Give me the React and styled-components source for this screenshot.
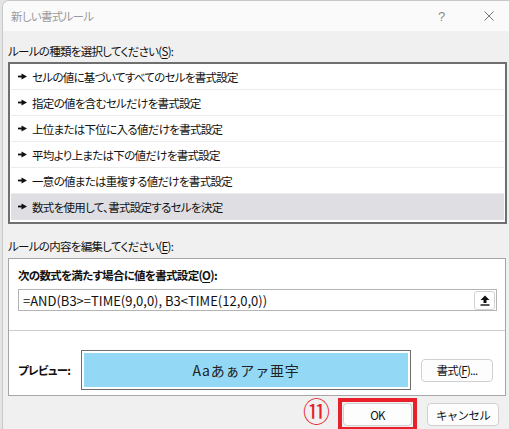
import React from "react";
import styled, { createGlobalStyle, css } from "styled-components";

const GlobalStyle = createGlobalStyle`
  body {
    margin: 0;
    background: #e4e4e4;
    font-family: "Noto Sans CJK JP", "Noto Sans", sans-serif;
    font-feature-settings: "palt";
    overflow: hidden;
  }
`;

// Yu Gothic UI is narrower than Noto, so tighten a bit
const uiText = css`
  font-size: 11.5px;
  letter-spacing: -0.7px;
`;

const DIALOG = styled.div`
  margin-left: 2px;
  width: 506px;
  height: 440px;
  background: #f0f0f0;
  border: 1px solid #c8c8c8;
  border-right: none;
  border-radius: 7px 0 0 0;
  overflow: hidden;
  display: flex;
  flex-direction: column;
`;

const TITLEBAR = styled.div`
  height: 30px;
  flex: none;
  background: #fafafa;
  display: flex;
  align-items: center;
  padding-left: 8px;
  ${uiText}
  color: #9a9a9a;
`;

const TITLE = styled.span`
  flex: 1;
`;

const HELP = styled.span`
  width: 14px;
  margin-right: 32px;
  color: #8a8a8a;
  font-size: 13px;
  font-family: "Liberation Sans", sans-serif;
`;

const CLOSE = styled.span`
  width: 10px;
  height: 10px;
  margin-right: 15px;
  display: flex;
`;

const BODY = styled.div`
  display: flex;
  flex-direction: column;
  padding: 0 2px 0 5px;
`;

const LABEL = styled.div`
  ${uiText}
  line-height: 16px;
  color: #111;
  margin-top: ${(p) => p.$top}px;
  u {
    text-decoration-thickness: 1px;
    text-underline-offset: 2px;
  }
`;

const LIST = styled.div`
  margin-top: 3px;
  border: 2px solid #6f6f6f;
  background: #fff;
  padding: 0 1px 2px 1px;
  display: flex;
  flex-direction: column;
`;

const ROW = styled.div`
  height: 26px;
  box-sizing: border-box;
  display: flex;
  align-items: center;
  padding-left: 7px;
  ${uiText}
  color: #111;
  background: ${(p) => (p.$selected ? "#dfdfe3" : "#fff")};
  border-bottom: 1px solid ${(p) => (p.$selected ? "#dfdfe3" : "#ececec")};
`;

const ARROW = styled.svg`
  width: 9px;
  height: 7px;
  margin-right: 5px;
  flex: none;
`;

const GROUP = styled.div`
  margin-top: 4px;
  margin-right: 1px;
  border: 1px solid #a6a6a6;
  background: #fff;
  display: flex;
  flex-direction: column;
`;

const FORMULA_AREA = styled.div`
  padding: 8px 8px 19px 9px;
  border-bottom: 1px solid #cdcdcd;
`;

const BOLD = styled.div`
  ${uiText}
  line-height: 16px;
  font-weight: 700;
  color: #111;
  u {
    text-underline-offset: 2px;
  }
`;

const INPUTBOX = styled.div`
  margin-top: 6px;
  height: 22px;
  box-sizing: border-box;
  border: 1px solid #b4b4b4;
  display: flex;
  align-items: center;
  padding: 0 1px 0 4px;
  font-size: 13px;
  color: #111;
`;

const FORMULA = styled.span`
  flex: 1;
  white-space: nowrap;
`;

const COLLAPSE = styled.button`
  width: 21px;
  height: 19px;
  padding: 0;
  border: 1px solid #d2d2d2;
  border-radius: 3px;
  background: #fff;
  display: flex;
  align-items: center;
  justify-content: center;
`;

const PREVIEW_AREA = styled.div`
  padding: 19px 10px 5px 9px;
  display: flex;
  align-items: center;
`;

const PREVIEW_LABEL = styled.span`
  width: 63px;
  ${uiText}
  font-weight: 700;
  color: #111;
`;

const PREVIEW = styled.div`
  width: 330px;
  height: 40px;
  box-sizing: border-box;
  border: 1px solid #6e6e6e;
  padding: 2px;
  background: #fff;
`;

const SAMPLE = styled.div`
  height: 100%;
  background: #93d9f5;
  display: flex;
  align-items: center;
  justify-content: center;
  font-size: 14px;
  letter-spacing: 0.8px;
  color: #222;
  font-feature-settings: normal;
`;

const BUTTON = styled.button`
  width: ${(p) => p.$w}px;
  height: 23px;
  padding: 0;
  box-sizing: border-box;
  border: 1px solid #d0d0d0;
  border-radius: 4px;
  background: #fdfdfd;
  font-family: inherit;
  ${uiText}
  color: #111;
  margin-left: ${(p) => p.$left || 0}px;
  margin-top: ${(p) => p.$top || 0}px;
  u {
    text-underline-offset: 2px;
  }
`;

const FOOTER = styled.div`
  margin-top: 2px;
  display: flex;
  justify-content: flex-end;
  align-items: flex-start;
  padding-right: 8px;
`;

const STEP = styled.span`
  font-size: 27px;
  line-height: 26px;
  height: 26px;
  color: #e8202a;
  margin-right: 8px;
  font-feature-settings: normal;
`;

const HIGHLIGHT = styled.div`
  border: 4px solid #e8202a;
  padding: 1px;
  display: flex;
  margin-right: 10px;
`;

const rules = [
  "セルの値に基づいてすべてのセルを書式設定",
  "指定の値を含むセルだけを書式設定",
  "上位または下位に入る値だけを書式設定",
  "平均より上または下の値だけを書式設定",
  "一意の値または重複する値だけを書式設定",
  "数式を使用して、書式設定するセルを決定",
];

const Arrow = () => (
  <ARROW viewBox="0 0 9 7">
    <rect x="0" y="2.6" width="4.5" height="1.8" fill="#111" />
    <polygon points="3.5,0.5 9,3.5 3.5,6.5" fill="#111" />
  </ARROW>
);

export default function App() {
  return (
    <>
      <GlobalStyle />
      <DIALOG>
        <TITLEBAR>
          <TITLE>新しい書式ルール</TITLE>
          <HELP>?</HELP>
          <CLOSE>
            <svg width="10" height="10" viewBox="0 0 10 10">
              <path d="M0.5 0.5 L9.5 9.5 M9.5 0.5 L0.5 9.5" stroke="#777" strokeWidth="1" />
            </svg>
          </CLOSE>
        </TITLEBAR>
        <BODY>
          <LABEL $top={12}>
            ルールの種類を選択してください(<u>S</u>):
          </LABEL>
          <LIST>
            {rules.map((r, i) => (
              <ROW key={r} $selected={i === rules.length - 1}>
                <Arrow />
                {r}
              </ROW>
            ))}
          </LIST>
          <LABEL $top={14}>
            ルールの内容を編集してください(<u>E</u>):
          </LABEL>
          <GROUP>
            <FORMULA_AREA>
              <BOLD>
                次の数式を満たす場合に値を書式設定(<u>O</u>):
              </BOLD>
              <INPUTBOX>
                <FORMULA>=AND(B3&gt;=TIME(9,0,0), B3&lt;TIME(12,0,0))</FORMULA>
                <COLLAPSE>
                  <svg width="10" height="11" viewBox="0 0 10 11">
                    <polygon points="5,0.5 9.5,5 6.5,5 6.5,8 3.5,8 3.5,5 0.5,5" fill="#111" />
                    <rect x="0.5" y="9.3" width="9" height="1.4" fill="#111" />
                  </svg>
                </COLLAPSE>
              </INPUTBOX>
            </FORMULA_AREA>
            <PREVIEW_AREA>
              <PREVIEW_LABEL>プレビュー:</PREVIEW_LABEL>
              <PREVIEW>
                <SAMPLE>Aaあぁアァ亜宇</SAMPLE>
              </PREVIEW>
              <BUTTON $w={72} $left={10}>
                書式(<u>F</u>)...
              </BUTTON>
            </PREVIEW_AREA>
          </GROUP>
          <FOOTER>
            <STEP>⑪</STEP>
            <HIGHLIGHT>
              <BUTTON $w={69}>OK</BUTTON>
            </HIGHLIGHT>
            <BUTTON $w={72} $top={5}>
              キャンセル
            </BUTTON>
          </FOOTER>
        </BODY>
      </DIALOG>
    </>
  );
}
